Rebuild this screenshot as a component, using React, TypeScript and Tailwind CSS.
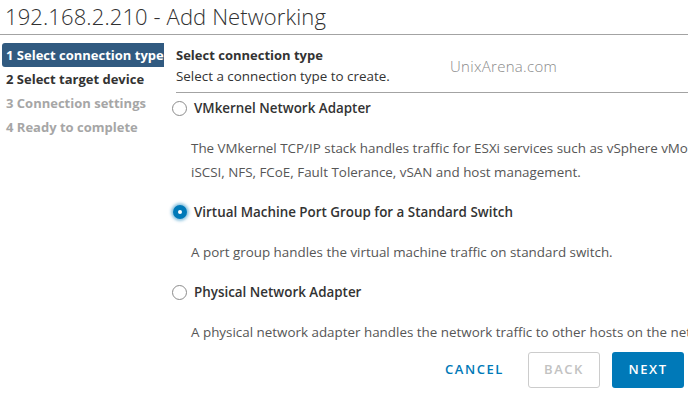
import { useState } from "react";

const steps = [
  { n: 1, label: "Select connection type", state: "active" },
  { n: 2, label: "Select target device", state: "next" },
  { n: 3, label: "Connection settings", state: "disabled" },
  { n: 4, label: "Ready to complete", state: "disabled" },
];

const options = [
  {
    id: "vmk",
    label: "VMkernel Network Adapter",
    desc: [
      "The VMkernel TCP/IP stack handles traffic for ESXi services such as vSphere vMotion,",
      "iSCSI, NFS, FCoE, Fault Tolerance, vSAN and host management.",
    ],
  },
  {
    id: "vmpg",
    label: "Virtual Machine Port Group for a Standard Switch",
    desc: ["A port group handles the virtual machine traffic on standard switch."],
  },
  {
    id: "pnic",
    label: "Physical Network Adapter",
    desc: ["A physical network adapter handles the network traffic to other hosts on the network."],
  },
];

function Radio({ checked }: { checked: boolean }) {
  return checked ? (
    <span className="grid h-[14px] w-[14px] shrink-0 place-items-center rounded-full bg-[#0079b8] shadow-[0_0_3px_2px_rgba(0,121,184,0.45)]">
      <span className="h-[4px] w-[4px] rounded-full bg-white" />
    </span>
  ) : (
    <span className="h-[15px] w-[15px] shrink-0 rounded-full border border-[#8c8c8c] bg-white" />
  );
}

export default function App() {
  const [type, setType] = useState("vmpg");

  return (
    <div className="relative h-[394px] w-[688px] overflow-hidden bg-white font-['Open_Sans',sans-serif] text-[#333]">
      {/* Header */}
      <div className="h-[35px] border-b border-[#a3a3a3] pl-[5px] pt-[2px] text-[22px] font-light leading-[28px] tracking-[0.005em] text-[#313131]">
        192.168.2.210 - Add Networking
      </div>

      {/* Body */}
      <div className="flex h-[313px]">
        <div className="w-[164px] shrink-0 pl-[2px] pt-[8px]">
          {steps.map((s) => (
            <div
              key={s.n}
              className={
                s.state === "active"
                  ? "h-6 rounded-l-[3px] bg-[#315a80] pl-[4px] text-[13px] font-bold leading-6 text-white"
                  : s.state === "next"
                  ? "h-6 pl-[4px] text-[13px] font-bold leading-6 text-[#333]"
                  : "h-6 pl-[4px] text-[13px] font-bold leading-6 text-[#a6a6a6]"
              }
            >
              {s.n} {s.label}
            </div>
          ))}
        </div>

        <div className="min-w-0 flex-1 overflow-hidden pl-[12px]">
          <div className="border-b border-[#a3a3a3] pb-[6px] pt-[10px]">
            <div className="text-[13px] font-bold leading-[20px] text-[#333]">Select connection type</div>
            <div className="mt-[1px] text-[13.4px] leading-[20px] text-[#333]">Select a connection type to create.</div>
          </div>

          <div className="flex flex-col gap-4 pt-[3px]">
            {options.map((o) => (
              <div key={o.id} className="flex flex-col gap-4">
                <label
                  className="flex h-6 cursor-pointer items-center gap-[7px] text-[13.4px] font-semibold text-[#333]"
                  onClick={() => setType(o.id)}
                >
                  <span className="-ml-[4px] flex w-[15px] justify-center">
                    <Radio checked={type === o.id} />
                  </span>
                  {o.label}
                </label>
                <div className="pl-[15px] text-[13.4px] leading-6 whitespace-nowrap text-[#565656]">
                  {o.desc.map((d) => (
                    <div key={d}>{d}</div>
                  ))}
                </div>
              </div>
            ))}
          </div>
        </div>
      </div>

      {/* Footer */}
      <div className="flex h-[46px] items-start justify-end gap-3 pr-[4px] pt-[4px]">
        <button className="h-9 px-3 text-[13px] font-semibold tracking-[0.12em] text-[#0079b8]">CANCEL</button>
        <button className="h-9 w-[72px] rounded-[3px] border border-[#cccccc] text-[13px] font-semibold tracking-[0.12em] text-[#c2c2c2]" disabled>
          BACK
        </button>
        <button className="h-9 w-[72px] rounded-[3px] bg-[#0079b8] text-[13px] font-semibold tracking-[0.12em] text-white">
          NEXT
        </button>
      </div>

      {/* Watermark */}
      <div className="pointer-events-none absolute left-[450px] top-[55px] text-[15px] font-light tracking-[0.02em] text-[#8a8a8a]">
        UnixArena.com
      </div>
    </div>
  );
}
